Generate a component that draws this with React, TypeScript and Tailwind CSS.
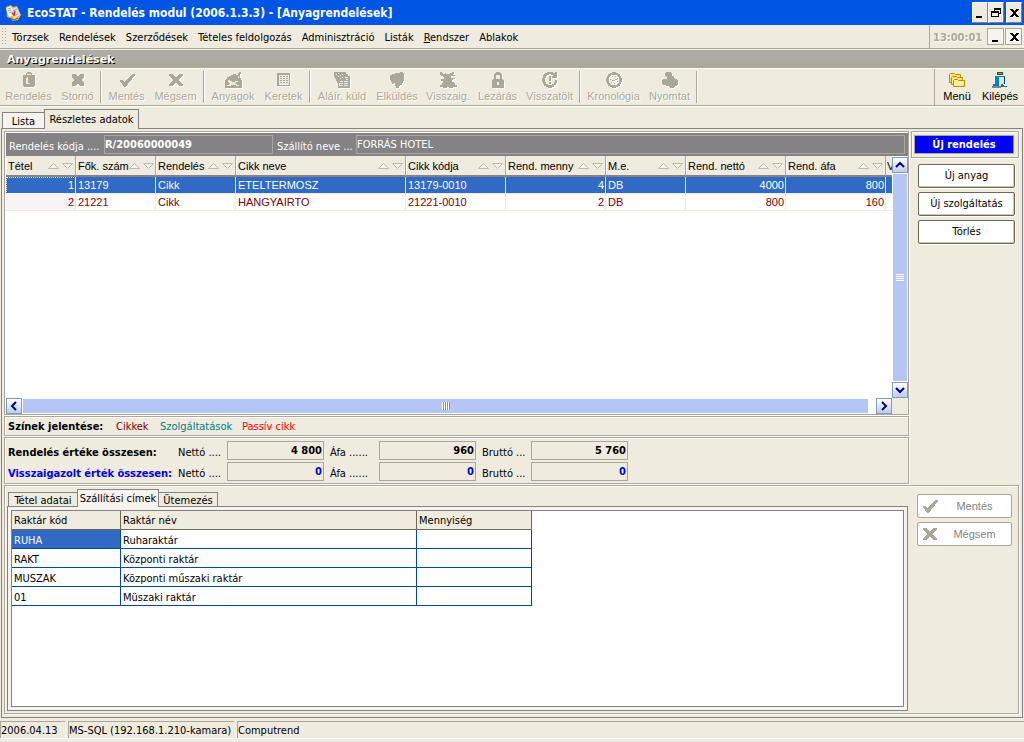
import { type ReactNode } from "react";

const MENU = [
  "Törzsek",
  "Rendelések",
  "Szerződések",
  "Tételes feldolgozás",
  "Adminisztráció",
  "Listák",
  "Rendszer",
  "Ablakok",
];

const TOOL_GROUPS = [
  [
    { label: "Rendelés", icon: "clipboard", width: "w-[45px]" },
    { label: "Stornó", icon: "cross", width: "w-[31px]" },
  ],
  [
    { label: "Mentés", icon: "check", width: "w-[35px]" },
    { label: "Mégsem", icon: "x", width: "w-[41px]" },
  ],
  [
    { label: "Anyagok", icon: "letter", width: "w-[42px]" },
    { label: "Keretek", icon: "table", width: "w-[37px]" },
  ],
  [
    { label: "Aláír. küld", icon: "sign", width: "w-[48px]" },
    { label: "Elküldés", icon: "send", width: "w-[40px]" },
    { label: "Visszaig.", icon: "bug", width: "w-[40px]" },
    { label: "Lezárás", icon: "lock", width: "w-[37px]" },
    { label: "Visszatölt", icon: "reload", width: "w-[45px]" },
  ],
  [
    { label: "Kronológia", icon: "clock", width: "w-[51px]" },
    { label: "Nyomtat", icon: "printer", width: "w-[39px]" },
  ],
];

const COLUMNS = [
  { label: "Tétel", width: "w-[70px]" },
  { label: "Fők. szám", width: "w-[80px]" },
  { label: "Rendelés", width: "w-[80px]" },
  { label: "Cikk neve", width: "w-[170px]" },
  { label: "Cikk kódja", width: "w-[100px]" },
  { label: "Rend. menny", width: "w-[100px]" },
  { label: "M.e.", width: "w-[80px]" },
  { label: "Rend. nettó", width: "w-[100px]" },
  { label: "Rend. áfa", width: "w-[100px]" },
];

const ITEMS = [
  ["1", "13179", "Cikk", "ETELTERMOSZ", "13179-0010", "4", "DB", "4000", "800"],
  ["2", "21221", "Cikk", "HANGYAIRTO", "21221-0010", "2", "DB", "800", "160"],
];

const NUMERIC = [0, 5, 7, 8];

const STORES = [
  ["RUHA", "Ruharaktár"],
  ["RAKT", "Központi raktár"],
  ["MUSZAK", "Központi műszaki raktár"],
  ["01", "Müszaki raktár"],
];

const TOTALS = [
  { id: "order", title: "Rendelés értéke összesen:", color: "text-black", values: ["4 800", "960", "5 760"] },
  { id: "confirmed", title: "Visszaigazolt érték összesen:", color: "text-[#0000f0]", values: ["0", "0", "0"] },
];

const TOTAL_LABELS = ["Nettó ....", "Áfa ......", "Bruttó ..."];

const PANEL = "border border-[#aca899] shadow-[1px_1px_0_#fff,inset_1px_1px_0_#fff]";

const ICONS: Record<string, ReactNode> = {
  clipboard: (
    <>
      <path d="M2 3h3V1h1V0h4v1h1v2h3v11h-1v1H3v-1H2z" />
      <path d="M6 2h4v1H6zM6 5h1v6h2v1H5V6h1z" fill="#efebde" />
    </>
  ),
  cross: <path d="M2 2h4v1h1v1h2V3h1V2h4v4h-1v1h-1v2h1v1h1v4h-4v-1H9v-1H7v1H6v1H2v-4h1V9h1V7H3V6H2z" />,
  check: <path d="M1 8h3v1h1v1h1V9h1V8h1V7h1V6h1V5h1V4h1V3h1V2h3v2h-1v1h-1v1h-1v2h-1v1h-1v1h-1v1h-1v1H9v1H8v1H7v1H5v-1H4v-1H3v-2H2v-1H1z" />,
  x: <path d="M1 2h4v1h1v1h1v1h2V4h1V3h1V2h4v2h-1v1h-1v1h-1v1h-1v2h1v1h1v1h1v1h1v2h-4v-1h-1v-1H9v-1H7v1H6v1H5v1H1v-2h1v-1h1v-1h1V9h1V7H4V6H3V5H2V4H1z" />,
  letter: (
    <>
      <path d="M0 8h1V7h1V5h2V4h2V3h2V2h3v1h2V1h1V0h2v2h-1v4h1v2h1v8H0z" />
      <path d="M3 8h2v1h2v1h3V9h3v1h-2v1h-1v1h2v1h2v1h-3v-1H6v1H2v-1h2v-1h1v-1H4v-1H3zM13 4h1v2h-1z" fill="#efebde" />
    </>
  ),
  table: (
    <>
      <path d="M1 1h13v13H1z" />
      <path d="M3 3h10v10H3z" fill="#efebde" />
      <path d="M4 4h2v1H4zM7 4h2v1H7zM10 4h2v1h-2zM4 6h2v1H4zM7 6h2v1H7zM10 6h2v1h-2zM4 8h2v1H4zM7 8h2v1H7zM10 8h2v1h-2zM4 10h2v1H4zM7 10h2v1H7zM10 10h2v1h-2z" />
    </>
  ),
  sign: (
    <>
      <path d="M0 0h12v2h2v2h2v12H4v-5H3V9H2V7H1V5H0z" />
      <path d="M6 9h3v1H6zM10 9h4v1h-4zM6 11h3v1H6zM10 11h4v1h-4zM6 13h3v1H6zM10 13h4v1h-4zM11 5h3v1h-3zM12 7h2v1h-2zM2 2h1v1H2zM4 1h1v1H4zM4 4h1v1H4zM6 3h1v1H6zM8 2h1v1H8zM6 6h1v1H6zM8 5h1v1H8zM5 11h1v3H5z" fill="#efebde" />
    </>
  ),
  send: <path d="M1 3h2V2h3V1h5V0h3v1h1v8h-1v2h-1v2h-2v1h-1v2H7v-2H6v-3H5v1H3v-2H2V8H1z" />,
  bug: <path d="M0 0h2v1h1v1h2V1h1v1h4V1h2V0h2v2h-1v1h2v1h-4v2h4v1h-2v1h-1v2h2v1h1v2h2v2h-4v1H9v-1H7v1H3v-1H0v-2h2v-2h1V9H1V7h3V5H3V4H1V3H0z" />,
  lock: (
    <>
      <path d="M5 1h1V0h4v1h1v1h1v5h1v1h1v8H2V8h1V7h1V2h1z" />
      <path d="M6 3h4v4H6zM7 10h2v3H7z" fill="#efebde" />
    </>
  ),
  reload: (
    <>
      <path d="M5 0h6v1h2V0h2v6h-5V4h1V3H9V2H7v1H5v1H4v2H3v4h1v2h2v1h4v-1h2v-2h1V8h2v3h-1v2h-2v2H10v1H6v-1H4v-1H2v-2H1v-2H0V6h1V3h1V2h1V1h2z" />
      <path d="M7 4h2v5H7zM7 10h2v2H7z" />
    </>
  ),
  clock: (
    <>
      <circle cx="8" cy="8" r="6.7" fill="none" stroke="#aca899" strokeWidth="2.5" />
      <path d="M4 7h1v1H4zM6 4h1v1H6zM9 4h1v1H9zM11 6h1v1h-1zM9 7h2v1H9zM6 8h3v1H6zM5 10h1v1H5zM8 11h1v1H8zM11 9h1v1h-1z" />
    </>
  ),
  printer: <path d="M4 0h5v1h1v3h2v2h1v1h2v1h1v5h-1v1h-2v1h-1v1H8v-1H7v-1H4v-1H1v-1H0V8h1V7h4V5H4V4H3V1h1z" />,
};

function ToolIcon({ name }: { name: string }) {
  return (
    <svg
      viewBox="0 0 16 16"
      fill="#aca899"
      shapeRendering="crispEdges"
      className="size-4 overflow-visible drop-shadow-[1px_1px_0_#fff]"
      aria-hidden="true"
    >
      {ICONS[name]}
    </svg>
  );
}

function SortArrows() {
  return (
    <svg viewBox="0 0 25 8" className="h-2 w-[25px] shrink-0" fill="none" stroke="#bdbaad" aria-hidden="true">
      <path d="M.5 6.5L5.5 1.5l5 5z" fill="#f7f3ef" />
      <path d="M14.5 1.5h10l-5 5z" fill="#f7f3ef" />
    </svg>
  );
}

function Chevron({ d }: { d: string }) {
  return (
    <svg viewBox="0 0 10 10" className="size-2.5" fill="none" stroke="#000080" strokeWidth="2" aria-hidden="true">
      <path d={d} />
    </svg>
  );
}

function ScrollButton({ label, d }: { label: string; d: string }) {
  return (
    <button
      aria-label={label}
      className="flex size-4 shrink-0 items-center justify-center border border-[#7b9ebd] bg-linear-to-b from-white to-[#bdcbff]"
    >
      <Chevron d={d} />
    </button>
  );
}

function AppLogo() {
  return (
    <svg viewBox="0 0 16 16" className="size-4" aria-hidden="true">
      <path d="M1 2l5-2 2 2 4-1 4 9-3 5-5 1-3-3-3-1z" fill="#e8b73c" />
      <path d="M1 3l5-2 3 9-5 2z" fill="#f4f4f0" />
      <path d="M6 4l6-2 3 8-6 4z" fill="#d3e2ee" />
      <path d="M3 4l3-1M3 6l3-1M4 8l3-1M8 6l4-2M9 11l4-2" stroke="#8ba6be" />
      <path d="M7 8l2 2 1-4" fill="none" stroke="#dc2b1c" strokeWidth="1.5" />
      <path d="M5 13l4 2 4-2" fill="none" stroke="#8c5a10" />
    </svg>
  );
}

function FolderIcon() {
  return (
    <svg viewBox="0 0 16 16" className="size-4" fill="#ffe67a" stroke="#bd8a00" aria-hidden="true">
      <path d="M.5 10.500v-8l1-1h4l1 1h5v8z" />
      <path d="M2.500 12.500v-7l1-1h4l1 1h5v7z" />
      <path d="M4.500 14.500v-6l1-1h3l1 1h6v6z" fill="#ffef9c" />
    </svg>
  );
}

function ExitIcon() {
  return (
    <svg viewBox="0 0 16 16" className="size-4" shapeRendering="crispEdges" aria-hidden="true">
      <path d="M5 0h6v3H5z" fill="#424242" />
      <path d="M6 1h4v1H6z" fill="#00ff00" />
      <path d="M3 4h10v9h2v2H9V5H7v9H1v-2h2z" fill="#0079b5" />
      <path d="M3 4h4v9H3z" fill="#0086c6" />
      <path d="M8 5h4v7H9z" fill="#d6e7f7" />
      <path d="M12 5h1v8h-1z" fill="#004a7b" />
      <path d="M0 14h9v2H0z" fill="#848284" />
      <path d="M11 12h2v1h2v1h-3z" fill="#fff" />
    </svg>
  );
}

function WindowGlyph({ kind }: { kind: "min" | "restore" | "close" }) {
  return (
    <svg viewBox="0 0 10 10" className="size-2.5" shapeRendering="crispEdges" aria-hidden="true">
      {kind === "min" && <path d="M1 8h6v2H1z" />}
      {kind === "restore" && <path fillRule="evenodd" d="M3 0h7v6H8v3H0V3h3zM4 2v1h4v2h1V2zM1 5v3h6V5z" />}
      {kind === "close" && (
        <path d="M1 1h3v1h1v1h1V2h1V1h3v1H9v1H8v1H7v2h1v1h1v1h1v1H7V8H6V7H5v1H4v1H1V8h1V7h1V6h1V4H3V3H2V2H1z" />
      )}
    </svg>
  );
}

function WindowButton({ kind, label }: { kind: "min" | "restore" | "close"; label: string }) {
  return (
    <button
      aria-label={label}
      className="flex h-[21px] w-4 items-center justify-center border border-t-white border-l-white border-r-[#848284] border-b-[#848284] bg-[#efebde]"
    >
      <WindowGlyph kind={kind} />
    </button>
  );
}

function TitleBar() {
  return (
    <header className="flex h-[25px] items-center bg-[#0055e5] pr-0.5 pl-[5px] text-white">
      <AppLogo />
      <h1 className="ml-1.5 flex-1 text-[12px] leading-4 font-bold whitespace-nowrap">
        EcoSTAT - Rendelés modul (2006.1.3.3) - [Anyagrendelések]
      </h1>
      <WindowButton kind="min" label="Kis méret" />
      <WindowButton kind="restore" label="Előző méret" />
      <div className="ml-0.5 flex">
        <WindowButton kind="close" label="Bezárás" />
      </div>
    </header>
  );
}

function MenuBar() {
  return (
    <div className="flex h-6 items-stretch border-b border-[#aca899]">
      <div className="my-0.5 ml-px w-1.5 bg-[radial-gradient(#aca899_1px,transparent_1px)] bg-size-[3px_3px]" />
      <nav className="flex flex-1 items-center gap-2.5 pt-[3px] pl-[5px]">
        {MENU.map((item) => (
          <button key={item} className="whitespace-nowrap">
            {item === "Rendszer" ? (
              <>
                <span className="underline">R</span>endszer
              </>
            ) : (
              item
            )}
          </button>
        ))}
      </nav>
      <div className="flex items-center border-l border-[#aca899] pr-0.5 pl-[3px]">
        <time className="w-[54px] pt-0.5 font-bold text-[#aca899] [text-shadow:1px_1px_0_#fff]">13:00:01</time>
        <button
          aria-label="Ablak kis méret"
          className="flex size-[17px] items-center justify-center border border-[#aca899] bg-[#f7f3ef]"
        >
          <WindowGlyph kind="min" />
        </button>
        <button
          aria-label="Ablak bezárása"
          className="ml-px flex size-[17px] items-center justify-center border border-[#aca899] bg-[#f7f3ef]"
        >
          <WindowGlyph kind="close" />
        </button>
      </div>
    </div>
  );
}

function Toolbar() {
  return (
    <div className="flex h-[38px] items-stretch border-t border-b border-t-white border-b-[#aca899] font-['Liberation_Sans',Arial,sans-serif] shadow-[0_1px_0_#fff]">
      {TOOL_GROUPS.map((group, i) => (
        <div
          key={i}
          className={`my-0.5 flex gap-[11px] border-r border-[#aca899] pr-[7px] ${i === 0 ? "pl-1.5" : "pl-2"} shadow-[1px_0_0_#fff]`}
        >
          {group.map(({ label, icon, width }) => (
            <button
              key={label}
              disabled
              className={`${width} flex flex-col items-center pt-px text-[#aca899] [text-shadow:1px_1px_0_#fff]`}
            >
              <ToolIcon name={icon} />
              <span className="leading-4 whitespace-nowrap">{label}</span>
            </button>
          ))}
        </div>
      ))}
      <div className="ml-auto flex gap-3 border-l border-[#aca899] pt-[3px] pr-[7px] pl-2">
        <button className="flex w-7 flex-col items-center">
          <FolderIcon />
          <span className="leading-4">Menü</span>
        </button>
        <button className="flex w-[34px] flex-col items-center">
          <ExitIcon />
          <span className="leading-4">Kilépés</span>
        </button>
      </div>
    </div>
  );
}

function OrderBar() {
  return (
    <div className="mt-px ml-px flex h-[23px] items-center bg-[#848284] pr-[3px] pl-[3px] text-white">
      <label htmlFor="order-code" className="w-[95px] pt-1 whitespace-nowrap">
        Rendelés kódja ....
      </label>
      <input
        id="order-code"
        readOnly
        defaultValue="R/20060000049"
        className="h-[19px] w-[169px] border border-[#aca899] bg-transparent font-bold outline-none"
      />
      <label htmlFor="supplier" className="ml-1 w-[79px] pt-1 whitespace-nowrap">
        Szállító neve ...
      </label>
      <input
        id="supplier"
        readOnly
        defaultValue="FORRÁS HOTEL"
        className="h-[19px] min-w-0 flex-1 border border-[#aca899] bg-transparent outline-none"
      />
    </div>
  );
}

function ItemsGrid() {
  return (
    <div className="ml-px grid h-[258px] grid-cols-[minmax(0,1fr)_16px] grid-rows-[minmax(0,1fr)_16px]">
      <div className="overflow-hidden bg-white font-['Liberation_Sans',Arial,sans-serif]">
        <table className="w-full table-fixed border-separate border-spacing-0">
          <thead>
            <tr className="bg-[#efebde]">
              {COLUMNS.map(({ label, width }) => (
                <th
                  key={label}
                  className={`${width} h-[21px] border-r border-b-2 border-r-[#aca899] border-b-[#848284] p-0 font-normal`}
                >
                  <div className="flex items-center justify-between border-l border-white pr-0.5 pl-px">
                    <span className="leading-4 whitespace-nowrap">{label}</span>
                    <SortArrows />
                  </div>
                </th>
              ))}
              <th className="border-b-2 border-[#848284] p-0 pl-px text-left font-normal">V</th>
            </tr>
          </thead>
          <tbody>
            {ITEMS.map((row, r) => (
              <tr key={row[0]} className={r === 0 ? "bg-[#316ac5] text-white" : "text-[#800000]"}>
                {row.map((cell, c) => (
                  <td
                    key={c}
                    className={`h-[17px] border-r border-b border-[#efebde] py-0 leading-4 ${
                      NUMERIC.includes(c) ? "pr-px pl-0 text-right" : "pr-0 pl-0.5"
                    } ${c === 0 && r === 0 ? "outline-1 -outline-offset-1 outline-dotted" : ""} ${
                      c === 0 && r === 1 ? "bg-[#f7f3f7]" : ""
                    }`}
                  >
                    {cell}
                  </td>
                ))}
                <td className="border-b border-[#efebde] p-0" />
              </tr>
            ))}
          </tbody>
        </table>
      </div>
      <div className="flex flex-col bg-[#fffef7] pt-px">
        <ScrollButton label="Fel" d="M1 7l4-4 4 4" />
        <div className="mx-px my-px flex flex-1 flex-col items-center justify-center gap-px bg-[#b4c6f7]">
          <i className="h-px w-2 bg-white" />
          <i className="h-px w-2 bg-white" />
          <i className="h-px w-2 bg-white" />
          <i className="h-px w-2 bg-white" />
        </div>
        <ScrollButton label="Le" d="M1 3l4 4 4-4" />
      </div>
      <div className="flex bg-[#fffef7]">
        <ScrollButton label="Balra" d="M7 1l-4 4 4 4" />
        <div className="my-px mr-2 ml-px flex flex-1 items-center justify-center bg-[#b4c6f7]">
          {[0, 1, 2, 3].map((n) => (
            <i key={n} className="h-2 w-0.5 border-r border-l border-r-[#7b9ebd] border-l-white" />
          ))}
        </div>
        <ScrollButton label="Jobbra" d="M3 1l4 4-4 4" />
      </div>
    </div>
  );
}

function Totals() {
  return (
    <section className={`${PANEL} flex h-[47px] flex-col gap-0.5 pt-[3px] pl-[3px]`}>
      {TOTALS.map(({ id, title, color, values }) => (
        <div key={id} className={`flex h-[19px] items-center ${color}`}>
          <h2 className="w-[170px] pt-1 font-bold whitespace-nowrap">{title}</h2>
          {TOTAL_LABELS.map((text, i) => (
            <div key={text} className="mr-1.5 flex items-center">
              <label htmlFor={`${id}-${i}`} className="w-[49px] pt-1 whitespace-nowrap text-black">
                {text}
              </label>
              <input
                id={`${id}-${i}`}
                readOnly
                defaultValue={values[i]}
                className="h-[19px] w-[97px] border border-[#aca899] bg-transparent pr-px text-right font-bold outline-none"
              />
            </div>
          ))}
        </div>
      ))}
    </section>
  );
}

function SideButton({ children }: { children: ReactNode }) {
  return (
    <button className="h-6 rounded-xs border border-[#6b6952] bg-white shadow-[inset_-1px_-1px_0_#cec7b5,1px_1px_0_#fff]">
      {children}
    </button>
  );
}

function StoresPanel() {
  return (
    <section className={`${PANEL} mt-px flex flex-1 pt-[3px] pb-0.5 pl-0.5`}>
      <div className="flex flex-1 flex-col">
        <div role="tablist" className="flex h-[17px] items-end pl-px">
          <button role="tab" className="h-3.5 w-[69px] border border-r-0 border-b-0 border-[#848284] leading-4 whitespace-nowrap">
            Tétel adatai
          </button>
          <button
            role="tab"
            aria-selected="true"
            className="relative z-10 -mb-px h-[18px] w-[82px] border border-b-0 border-[#848284] bg-[#f7f3ef] leading-4 whitespace-nowrap"
          >
            Szállítási címek
          </button>
          <button role="tab" className="h-3.5 w-[59px] border border-b-0 border-l-0 border-[#848284] leading-4 whitespace-nowrap">
            Ütemezés
          </button>
        </div>
        <div className="flex flex-1 border border-[#848284] bg-[#f7f3ef] p-[3px]">
          <div className="flex-1 border border-[#848284] bg-white">
            <table className="w-[520px] table-fixed border-separate border-spacing-0 text-left">
              <thead>
                <tr className="bg-[#efebde]">
                  <th className="h-[19px] w-[109px] border-r border-b border-[#6b6952] p-0 pt-0.5 pl-0.5 font-normal">Raktár kód</th>
                  <th className="w-[296px] border-r border-b border-[#6b6952] p-0 pt-0.5 pl-0.5 font-normal">Raktár név</th>
                  <th className="w-[115px] border-r border-b border-[#6b6952] p-0 pt-0.5 pl-0.5 font-normal">Mennyiség</th>
                </tr>
              </thead>
              <tbody>
                {STORES.map(([code, name], i) => (
                  <tr key={code}>
                    <td
                      className={`h-[19px] border-r border-b border-[#004a94] p-0 pt-[3px] pl-0.5 ${
                        i === 0 ? "bg-[#316ac5] text-white" : ""
                      }`}
                    >
                      {code}
                    </td>
                    <td className="border-r border-b border-[#004a94] p-0 pt-[3px] pl-0.5">{name}</td>
                    <td className="border-r border-b border-[#004a94] p-0" />
                  </tr>
                ))}
              </tbody>
            </table>
          </div>
        </div>
      </div>
      <div className="flex w-[110px] flex-col gap-1 pt-[5px] pr-1.5 pl-[9px] font-['Liberation_Sans',Arial,sans-serif]">
        <button disabled className="flex h-6 items-center rounded-xs border border-[#aca899] bg-white pl-1 text-[#848284]">
          <ToolIcon name="check" />
          <span className="flex-1 text-center">Mentés</span>
        </button>
        <button disabled className="flex h-6 items-center rounded-xs border border-[#aca899] bg-white pl-1 text-[#848284]">
          <ToolIcon name="x" />
          <span className="flex-1 text-center">Mégsem</span>
        </button>
      </div>
    </section>
  );
}

function StatusBar() {
  return (
    <footer className="flex h-[18px] gap-[3px] border-b border-white leading-[17px] whitespace-nowrap">
      <span className="w-[65px] border-t border-l border-[#aca899]">2006.04.13</span>
      <span className="w-[166px] border-t border-l border-[#aca899]">MS-SQL (192.168.1.210-kamara)</span>
      <span className="flex-1 border-t border-l border-[#aca899]">Computrend</span>
    </footer>
  );
}

export default function App() {
  return (
    <div className="flex min-h-screen flex-col bg-[#efebde] pb-[3px] font-['DejaVu_Sans_Condensed','DejaVu_Sans',sans-serif] text-[11px] leading-[14px] text-black">
      <TitleBar />
      <MenuBar />
      <div className="mt-px flex h-[18px] items-center bg-linear-to-b from-[#adadad] to-[#aca899] pt-0.5 pl-[7px]">
        <h2 className="font-['DejaVu_Sans',sans-serif] font-bold text-white [text-shadow:1px_1px_0_#000]">
          Anyagrendelések
        </h2>
      </div>
      <Toolbar />

      <main className="mt-[3px] flex flex-1 flex-col pr-px pl-px">
        <div role="tablist" className="flex h-[19px] items-end pl-px">
          <button role="tab" className="h-4 w-[43px] border border-b-0 border-[#848284] bg-[#f7f3ef] pt-0.5">
            Lista
          </button>
          <button
            role="tab"
            aria-selected="true"
            className="relative z-10 -mb-px -ml-px h-5 w-[95px] border border-b-0 border-[#848284] bg-[#efebde] pt-px whitespace-nowrap"
          >
            Részletes adatok
          </button>
        </div>
        <div className="flex flex-1 flex-col border border-[#848284] pt-0.5 pr-[3px] pb-[3px] pl-0.5">
          <div className="flex">
            <div className="flex min-w-0 flex-1 flex-col gap-px">
              <section className={PANEL}>
                <OrderBar />
                <ItemsGrid />
              </section>
              <section className={`${PANEL} flex h-5 items-center pt-0.5 pl-[3px]`}>
                <h2 className="w-[108px] font-bold whitespace-nowrap">Színek jelentése:</h2>
                <span className="w-11 text-[#800000]">Cikkek</span>
                <span className="w-[82px] text-[#008080]">Szolgáltatások</span>
                <span className="text-[#ff0000]">Passív cikk</span>
              </section>
              <Totals />
            </div>
            <aside className="flex w-[110px] flex-col pl-0.5">
              <div className={`${PANEL} flex py-[3px] pr-1 pl-0.5`}>
                <button className="h-[19px] flex-1 border border-[#aca899] bg-[#0000ff] font-bold text-white">
                  Új rendelés
                </button>
              </div>
              <div className="flex flex-col gap-1 pt-1.5 pr-1 pl-[7px]">
                <SideButton>Új anyag</SideButton>
                <SideButton>Új szolgáltatás</SideButton>
                <SideButton>Törlés</SideButton>
              </div>
            </aside>
          </div>
          <StoresPanel />
        </div>
      </main>

      <div className="h-[3px]" />
      <StatusBar />
    </div>
  );
}
